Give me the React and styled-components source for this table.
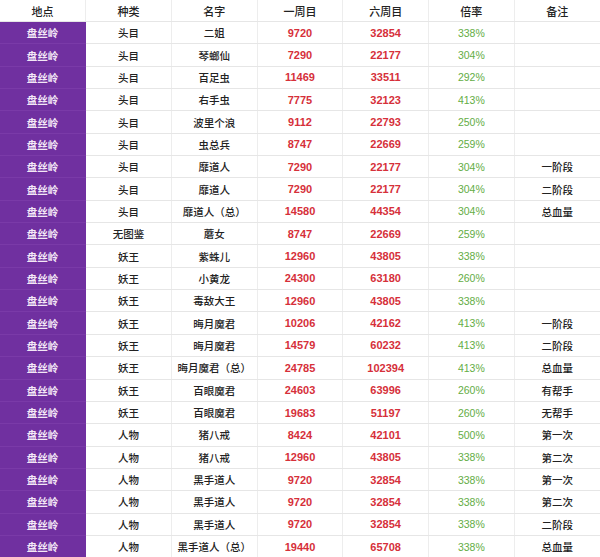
import React from "react";
import styled, { createGlobalStyle } from "styled-components";

const GlobalStyle = createGlobalStyle`
  html, body {
    margin: 0;
    padding: 0;
    background: #fff;
  }
  body {
    font-family: "Liberation Sans", "Noto Sans CJK SC", sans-serif;
  }
`;

const Table = styled.table`
  width: 600px;
  border-collapse: collapse;
  table-layout: fixed;
  font-size: 10.5px;
`;

const HeadCell = styled.th`
  height: 21px;
  padding: 0;
  font-size: 11px;
  font-weight: 500;
  color: #222;
  text-align: center;
  border-right: 1px solid #ededed;
  border-bottom: 1px solid #e6e6e6;
  &:last-child {
    border-right: none;
  }
`;

const Row = styled.tr`
  height: 22.35px;
`;

const Cell = styled.td`
  padding: 0;
  text-align: center;
  border-right: 1px solid #ededed;
  border-bottom: 1px solid #e6e6e6;
  color: #222;
  font-weight: 500;
  white-space: nowrap;
  &:last-child {
    border-right: none;
  }
`;

const PlaceCell = styled(Cell)`
  background: #7030a0;
  color: #f3e8f7;
  font-weight: 700;
  border-right: 1px solid #7030a0;
  border-bottom: 1px solid #7a3aa8;
`;

const HpCell = styled(Cell)`
  font-size: 11px;
  color: #d6303a;
  font-weight: 700;
`;

const RateCell = styled(Cell)`
  color: #63ad45;
  font-weight: 400;
`;

const rows = [
  ["头目", "二姐", 9720, 32854, "338%", ""],
  ["头目", "琴螂仙", 7290, 22177, "304%", ""],
  ["头目", "百足虫", 11469, 33511, "292%", ""],
  ["头目", "右手虫", 7775, 32123, "413%", ""],
  ["头目", "波里个浪", 9112, 22793, "250%", ""],
  ["头目", "虫总兵", 8747, 22669, "259%", ""],
  ["头目", "靡道人", 7290, 22177, "304%", "一阶段"],
  ["头目", "靡道人", 7290, 22177, "304%", "二阶段"],
  ["头目", "靡道人（总）", 14580, 44354, "304%", "总血量"],
  ["无图鉴", "蘑女", 8747, 22669, "259%", ""],
  ["妖王", "紫蛛儿", 12960, 43805, "338%", ""],
  ["妖王", "小黄龙", 24300, 63180, "260%", ""],
  ["妖王", "毒敌大王", 12960, 43805, "338%", ""],
  ["妖王", "晦月魔君", 10206, 42162, "413%", "一阶段"],
  ["妖王", "晦月魔君", 14579, 60232, "413%", "二阶段"],
  ["妖王", "晦月魔君（总）", 24785, 102394, "413%", "总血量"],
  ["妖王", "百眼魔君", 24603, 63996, "260%", "有帮手"],
  ["妖王", "百眼魔君", 19683, 51197, "260%", "无帮手"],
  ["人物", "猪八戒", 8424, 42101, "500%", "第一次"],
  ["人物", "猪八戒", 12960, 43805, "338%", "第二次"],
  ["人物", "黑手道人", 9720, 32854, "338%", "第一次"],
  ["人物", "黑手道人", 9720, 32854, "338%", "第二次"],
  ["人物", "黑手道人", 9720, 32854, "338%", "二阶段"],
  ["人物", "黑手道人（总）", 19440, 65708, "338%", "总血量"],
];

const headers = ["地点", "种类", "名字", "一周目", "六周目", "倍率", "备注"];

export default function App() {
  return (
    <>
      <GlobalStyle />
      <Table>
        <thead>
          <tr>
            {headers.map((h) => (
              <HeadCell key={h}>{h}</HeadCell>
            ))}
          </tr>
        </thead>
        <tbody>
          {rows.map((r, i) => (
            <Row key={i}>
              <PlaceCell>盘丝岭</PlaceCell>
              <Cell>{r[0]}</Cell>
              <Cell>{r[1]}</Cell>
              <HpCell>{r[2]}</HpCell>
              <HpCell>{r[3]}</HpCell>
              <RateCell>{r[4]}</RateCell>
              <Cell>{r[5]}</Cell>
            </Row>
          ))}
        </tbody>
      </Table>
    </>
  );
}
